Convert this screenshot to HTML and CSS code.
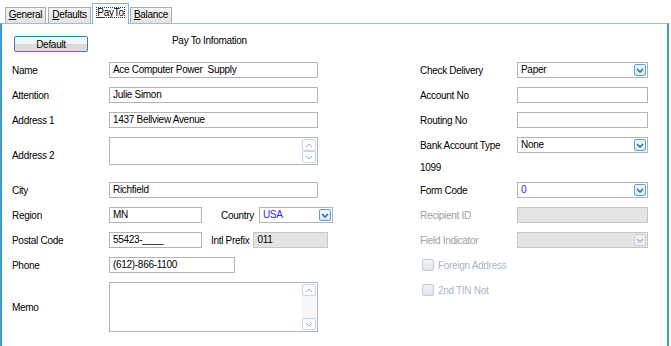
FILE: index.html
```html
<!DOCTYPE html>
<html lang="en">

<head>
  <meta charset="UTF-8">
  <title>Pay To</title>
  <link rel="stylesheet" href="styles.css">
</head>

<body>
  <div class="tabs">
    <span class="tab tab-general"><u>G</u>eneral</span>
    <span class="tab tab-defaults"><u>D</u>efaults</span>
    <span class="tab tab-payto active"><span class="focus"><u>P</u>ayTo</span></span>
    <span class="tab tab-balance"><u>B</u>alance</span>
  </div>
  <div class="panel">
    <div class="head">
      <button class="btn">Default</button>
      <span class="title">Pay To Infomation</span>
    </div>
    <div class="body">
      <!-- left column -->
      <div class="form left">
        <label>Name</label>
        <div class="field w-full">Ace Computer Power&nbsp; Supply</div>

        <label>Attention</label>
        <div class="field w-full">Julie Simon</div>

        <label>Address 1</label>
        <div class="field w-full">1437 Bellview Avenue</div>

        <label>Address 2</label>
        <div class="field memo addr2">
          <span class="text"></span>
          <span class="scroll">
            <i class="sbtn"><svg width="8" height="5" viewBox="0 0 8 5"><polyline points="1,4 4,1 7,4" /></svg></i>
            <i class="sbtn"><svg width="8" height="5" viewBox="0 0 8 5"><polyline points="1,1 4,4 7,1" /></svg></i>
          </span>
        </div>

        <label>City</label>
        <div class="field w-full">Richfield</div>

        <label>Region</label>
        <div class="line">
          <div class="field w-short">MN</div>
          <span class="inline-label country">Country</span>
          <div class="field combo w-country">
            <span class="text blue">USA</span>
            <i class="drop"><svg width="8" height="5" viewBox="0 0 8 5"><polyline points="1,1 4,4 7,1" /></svg></i>
          </div>
        </div>

        <label>Postal Code</label>
        <div class="line">
          <div class="field w-short">55423-____</div>
          <span class="inline-label prefix">Intl Prefix</span>
          <div class="field disabled w-prefix">011</div>
        </div>

        <label>Phone</label>
        <div class="field w-phone">(612)-866-1100</div>

        <label>Memo</label>
        <div class="field memo memo-big">
          <span class="text"></span>
          <span class="scroll">
            <i class="sbtn"><svg width="8" height="5" viewBox="0 0 8 5"><polyline points="1,4 4,1 7,4" /></svg></i>
            <i class="sbtn"><svg width="8" height="5" viewBox="0 0 8 5"><polyline points="1,1 4,4 7,1" /></svg></i>
          </span>
        </div>
      </div>

      <!-- right column -->
      <div class="form right">
        <label>Check Delivery</label>
        <div class="field combo w-right">
          <span class="text">Paper</span>
          <i class="drop"><svg width="8" height="5" viewBox="0 0 8 5"><polyline points="1,1 4,4 7,1" /></svg></i>
        </div>

        <label>Account No</label>
        <div class="field w-right"></div>

        <label>Routing No</label>
        <div class="field w-right"></div>

        <label>Bank Account Type</label>
        <div class="field combo w-right">
          <span class="text">None</span>
          <i class="drop"><svg width="8" height="5" viewBox="0 0 8 5"><polyline points="1,1 4,4 7,1" /></svg></i>
        </div>

        <label class="group">1099</label>

        <label>Form Code</label>
        <div class="field combo w-right">
          <span class="text blue">0</span>
          <i class="drop"><svg width="8" height="5" viewBox="0 0 8 5"><polyline points="1,1 4,4 7,1" /></svg></i>
        </div>

        <label class="off">Recipient ID</label>
        <div class="field disabled w-right"></div>

        <label class="off">Field Indicator</label>
        <div class="field combo disabled w-right">
          <span class="text"></span>
          <i class="drop off"><svg width="8" height="5" viewBox="0 0 8 5"><polyline points="1,1 4,4 7,1" /></svg></i>
        </div>

        <div class="check"><i class="box"></i>Foreign Address</div>
        <div class="check"><i class="box"></i>2nd TIN Not</div>
      </div>
    </div>
  </div>
</body>

</html>
```

FILE: styles.css
```css
body {
  margin: 0;
  width: 671px;
  height: 346px;
  overflow: hidden;
  background: #fff;
  font-family: "Liberation Sans", Arial, sans-serif;
  font-size: 10px;
  letter-spacing: -0.3px;
  color: #000;
}

/* tabs */
.tabs {
  height: 23px;
  display: flex;
  align-items: flex-end;
  gap: 2px;
  padding-left: 5px;
  position: relative;
  z-index: 1;
}

.tab {
  height: 15px;
  line-height: 14px;
  box-sizing: content-box;
  border: 1px solid #acacac;
  border-bottom: none;
  background: linear-gradient(#f3f3f3, #e3e3e3);
  color: #000;
  text-align: center;
}

.tab-general { width: 39px; }
.tab-defaults { width: 41px; }
.tab-payto { width: 35px; }
.tab-balance { width: 40px; }

.tab.active {
  height: 20px;
  margin: 0 -1px -1px -1px;
  line-height: 17px;
  background: #fff;
  border-color: #7eb4ea;
}

.tab .focus {
  outline: 1px dotted #333;
  outline-offset: -1px;
  padding: 0 1px;
}

/* panel */
.panel {
  width: 665px;
  height: 322px;
  border-top: 1px solid #8fc3ea;
  border-left: 2px solid #3f98d8;
  border-right: 2px solid #3f98d8;
}

.head {
  display: flex;
  align-items: center;
  padding: 12px 0 0 12px;
}

.btn {
  width: 74px;
  height: 16px;
  padding: 0;
  border: 1px solid #3c7fb1;
  border-radius: 2px;
  background: linear-gradient(#f4f4f4 50%, #dcdcdc 50%);
  font: inherit;
  letter-spacing: inherit;
  color: #000;
}

.title {
  margin-left: 84px;
  margin-top: -7px;
}

.body {
  display: flex;
  padding: 10px 0 0 10px;
}

.form {
  display: grid;
  grid-template-columns: 97px auto;
  row-gap: 9px;
  align-items: center;
  align-content: start;
}

.form.left {
  width: 408px;
}

.form label {
  white-space: nowrap;
}

.form label.off {
  color: #a0a0a0;
}

.form label.group {
  grid-column: 1 / 3;
  height: 11px;
  line-height: 11px;
}

/* inputs */
.field {
  height: 16px;
  box-sizing: border-box;
  border: 1px solid #b4b4b4;
  background: #fff;
  padding: 0 3px;
  line-height: 14px;
  white-space: nowrap;
  display: flex;
  align-items: center;
}

.field.disabled {
  background: #e4e4e4;
  border-color: #c6c6c6;
}

.w-full { width: 209px; }
.w-short { width: 93px; }
.w-country { width: 74px; }
.w-prefix { width: 75px; }
.w-phone { width: 126px; }
.w-right { width: 131px; }

.blue {
  color: #2a2ae0;
}

.line {
  display: flex;
  align-items: center;
}

.inline-label.country {
  margin: 0 5px 0 19px;
}

.inline-label.prefix {
  margin: 0 4px 0 9px;
}

.combo {
  padding-right: 1px;
}

.combo .text,
.memo .text {
  flex: 1;
}

.drop {
  width: 12px;
  height: 12px;
  box-sizing: border-box;
  border: 1px solid #5f9fdc;
  border-radius: 2px;
  background: linear-gradient(#eef6fe, #d5e8fa);
  display: flex;
  align-items: center;
  justify-content: center;
}

.drop svg polyline,
.sbtn svg polyline {
  fill: none;
  stroke: #2d5a8c;
  stroke-width: 1.3;
}

.drop.off {
  border-color: #c9d4de;
  background: #eef1f4;
}

.drop.off svg polyline {
  stroke: #a8b6c4;
}

/* multiline boxes */
.memo {
  width: 209px;
  align-items: stretch;
  padding: 1px 1px 1px 3px;
}

.addr2 {
  height: 28px;
  margin-bottom: 8px;
}

.memo-big {
  height: 50px;
}

.scroll {
  width: 14px;
  display: flex;
  flex-direction: column;
  justify-content: space-between;
  background: #f7f7f7;
}

.sbtn {
  height: 12px;
  box-sizing: border-box;
  border: 1px solid #c4d6e8;
  border-radius: 2px;
  background: #fbfdff;
  display: flex;
  align-items: center;
  justify-content: center;
}

.sbtn svg polyline {
  stroke: #9db3c9;
  stroke-width: 1;
}

/* checkboxes */
.check {
  grid-column: 1 / 3;
  height: 16px;
  display: flex;
  align-items: center;
  color: #a9b6c4;
  padding-left: 2px;
}

.check .box {
  width: 12px;
  height: 12px;
  box-sizing: border-box;
  border: 1px solid #bfcbd8;
  border-radius: 2px;
  background: linear-gradient(#f2f4f6, #e2e6ea);
  margin-right: 4px;
}
```
